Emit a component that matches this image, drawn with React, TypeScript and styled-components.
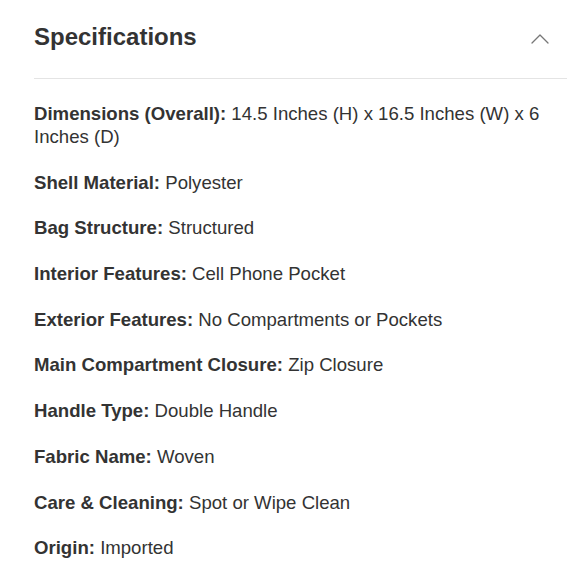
import React from "react";
import styled, { createGlobalStyle } from "styled-components";

const Global = createGlobalStyle`
  html, body { margin: 0; padding: 0; background: #ffffff; }
  body { font-family: "Liberation Sans", Arial, Helvetica, sans-serif; color: #333333; }
`;

const Page = styled.div`
  width: 580px;
  height: 580px;
  overflow: hidden;
  background: #ffffff;
  padding: 0 13px 0 34px;
  box-sizing: border-box;
`;

const Header = styled.div`
  display: flex;
  align-items: center;
  justify-content: space-between;
  padding-top: 20px;
  padding-bottom: 24px;
  border-bottom: 1.5px solid #e4e4e4;
`;

const Title = styled.h2`
  margin: 0;
  font-size: 24px;
  line-height: 34px;
  font-weight: 700;
  color: #333333;
`;

const Chevron = styled.svg`
  width: 18px;
  height: 11px;
  margin-right: 18px;
  margin-top: 2px;
`;

const List = styled.div`
  display: flex;
  flex-direction: column;
  gap: 22.7px;
  padding-top: 23px;
`;

const Row = styled.div`
  font-size: 18.6px;
  line-height: 23px;
  color: #333333;
  padding-right: 20px;
`;

const Label = styled.span`
  font-weight: 700;
`;

const specs: [string, string][] = [
  ["Dimensions (Overall):", "14.5 Inches (H) x 16.5 Inches (W) x 6 Inches (D)"],
  ["Shell Material:", "Polyester"],
  ["Bag Structure:", "Structured"],
  ["Interior Features:", "Cell Phone Pocket"],
  ["Exterior Features:", "No Compartments or Pockets"],
  ["Main Compartment Closure:", "Zip Closure"],
  ["Handle Type:", "Double Handle"],
  ["Fabric Name:", "Woven"],
  ["Care & Cleaning:", "Spot or Wipe Clean"],
  ["Origin:", "Imported"],
];

export default function App() {
  return (
    <>
      <Global />
      <Page>
        <Header>
          <Title>Specifications</Title>
          <Chevron viewBox="0 0 18 11" fill="none">
            <path d="M1 10 L9 2 L17 10" stroke="#777777" strokeWidth="1.3" strokeLinecap="round" strokeLinejoin="round" />
          </Chevron>
        </Header>
        <List>
          {specs.map(([k, v]) => (
            <Row key={k}>
              <Label>{k}</Label> {v}
            </Row>
          ))}
        </List>
      </Page>
    </>
  );
}
